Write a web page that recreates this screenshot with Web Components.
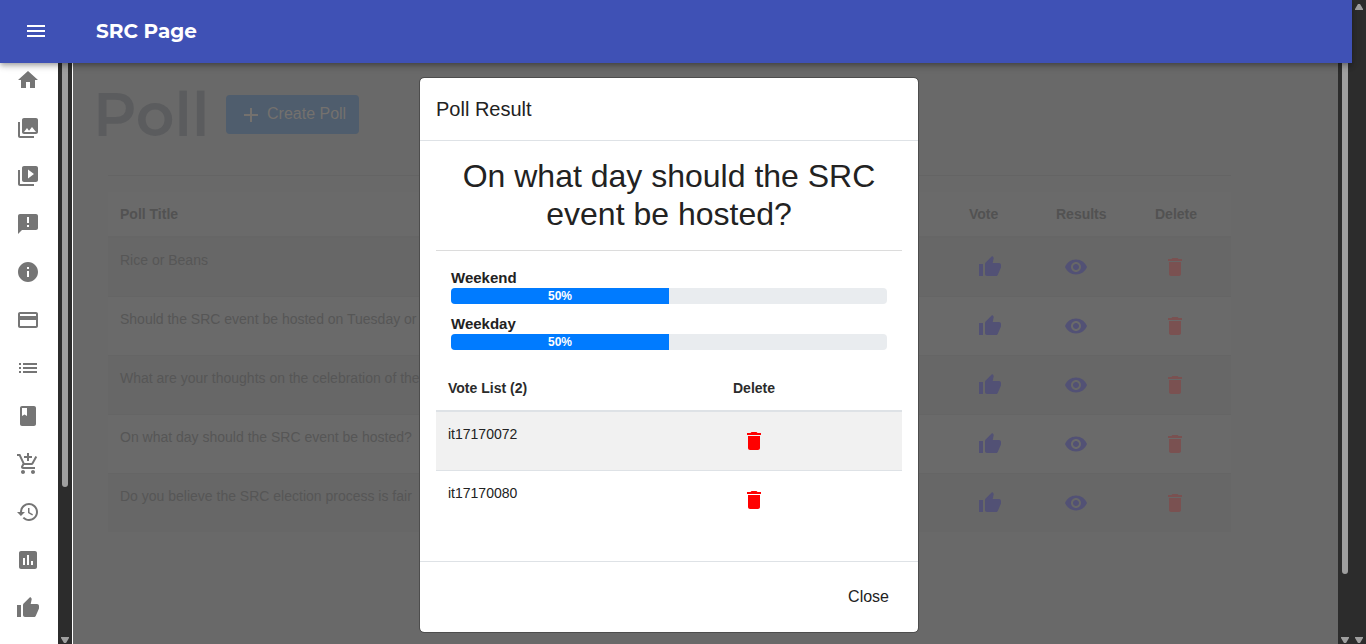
<!DOCTYPE html>
<html lang="en">
<head>
<meta charset="utf-8">
<title>SRC Page</title>
<style>
html, body { margin: 0; height: 100%; }
body { font-family: "Liberation Sans", Arial, sans-serif; font-size: 14px; color: #212529; overflow: hidden; }
</style>
</head>
<body>
<src-app></src-app>
<script>
const PATHS = {
  menu: 'M3 18h18v-2H3v2zm0-5h18v-2H3v2zm0-7v2h18V6H3z',
  home: 'M10 20v-6h4v6h5v-8h3L12 3 2 12h3v8z',
  photos: 'M22 16V4c0-1.100-.9-2-2-2H8c-1.100 0-2 .9-2 2v12c0 1.100.9 2 2 2h12c1.100 0 2-.9 2-2zm-11-4l2.030 2.710L16 11l4 5H8l3-4zM2 6v14c0 1.100.9 2 2 2h14v-2H4V6H2z',
  videos: 'M4 6H2v14c0 1.100.9 2 2 2h14v-2H4V6zm16-4H8c-1.100 0-2 .9-2 2v12c0 1.100.9 2 2 2h12c1.100 0 2-.9 2-2V4c0-1.100-.9-2-2-2zm-8 12.500v-9l6 4.500-6 4.500z',
  feedback: 'M20 2H4c-1.100 0-1.990.9-1.990 2L2 22l4-4h14c1.100 0 2-.9 2-2V4c0-1.100-.9-2-2-2zm-7 9h-2V5h2v6zm0 4h-2v-2h2v2z',
  info: 'M12 2C6.480 2 2 6.480 2 12s4.480 10 10 10 10-4.480 10-10S17.520 2 12 2zm1 15h-2v-6h2v6zm0-8h-2V7h2v2z',
  card: 'M20 4H4c-1.110 0-1.990.890-1.990 2L2 18c0 1.110.890 2 2 2h16c1.110 0 2-.890 2-2V6c0-1.110-.890-2-2-2zm0 14H4v-6h16v6zm0-10H4V6h16v2z',
  list: 'M3 13h2v-2H3v2zm0 4h2v-2H3v2zm0-8h2V7H3v2zm4 4h14v-2H7v2zm0 4h14v-2H7v2zM7 7v2h14V7H7z',
  book: 'M18 2H6c-1.100 0-2 .9-2 2v16c0 1.100.9 2 2 2h12c1.100 0 2-.9 2-2V4c0-1.100-.9-2-2-2zM6 4h5v8l-2.500-1.500L6 12V4z',
  cart: 'M11 9h2V6h3V4h-3V1h-2v3H8v2h3v3zm-4 9c-1.100 0-1.990.9-1.990 2S5.900 22 7 22s2-.9 2-2-.9-2-2-2zm10 0c-1.100 0-1.990.9-1.990 2s.890 2 1.990 2 2-.9 2-2-.9-2-2-2zm-9.830-3.250l.030-.120.9-1.630h7.450c.750 0 1.410-.410 1.750-1.030l3.860-7.010L19.420 4h-.010l-1.100 2-2.760 5H8.530l-.130-.270L6.160 6l-.950-2-.940-2H1v2h2l3.600 7.590-1.350 2.450c-.160.280-.250.610-.250.960 0 1.100.9 2 2 2h12v-2H7.420c-.130 0-.250-.110-.250-.250z',
  history: 'M13 3c-4.970 0-9 4.030-9 9H1l3.890 3.890.070.140L9 12H6c0-3.870 3.130-7 7-7s7 3.130 7 7-3.130 7-7 7c-1.930 0-3.680-.790-4.940-2.060l-1.420 1.420C8.270 19.990 10.510 21 13 21c4.970 0 9-4.030 9-9s-4.030-9-9-9zm-1 5v5l4.280 2.540.720-1.210-3.500-2.080V8H12z',
  chart: 'M19 3H5c-1.100 0-2 .9-2 2v14c0 1.100.9 2 2 2h14c1.100 0 2-.9 2-2V5c0-1.100-.9-2-2-2zM9 17H7v-7h2v7zm4 0h-2V7h2v10zm4 0h-2v-4h2v4z',
  thumb: 'M1 21h4V9H1v12zm22-11c0-1.100-.9-2-2-2h-6.310l.950-4.570.030-.320c0-.410-.170-.790-.440-1.060L14.170 1 7.590 7.590C7.220 7.950 7 8.450 7 9v10c0 1.100.9 2 2 2h9c.830 0 1.540-.5 1.840-1.220l3.020-7.050c.090-.230.140-.470.140-.730v-2z',
  eye: 'M12 4.500C7 4.500 2.730 7.610 1 12c1.730 4.390 6 7.500 11 7.500s9.270-3.110 11-7.500c-1.730-4.390-6-7.500-11-7.500zM12 17c-2.760 0-5-2.240-5-5s2.240-5 5-5 5 2.240 5 5-2.240 5-5 5zm0-8c-1.660 0-3 1.340-3 3s1.340 3 3 3 3-1.340 3-3-1.340-3-3-3z',
  trash: 'M6 19c0 1.100.9 2 2 2h8c1.100 0 2-.9 2-2V7H6v12zM19 4h-3.500l-1-1h-5l-1 1H5v2h14V4z',
  add: 'M19 13h-6v6h-2v-6H5v-2h6V5h2v6h6v2z'
};

function define(name, render) {
  customElements.define(name, class extends HTMLElement {
    constructor() {
      super();
      this.attachShadow({ mode: 'open' });
    }
    connectedCallback() {
      const template = document.createElement('template');
      template.innerHTML = render(this);
      this.shadowRoot.replaceChildren(template.content.cloneNode(true));
    }
  });
}

define('md-icon', el => `
  <style>:host { display: block; width: 24px; height: 24px; } svg { display: block; width: 100%; height: 100%; fill: currentColor; }</style>
  <svg viewBox="0 0 24 24" aria-hidden="true"><path d="${PATHS[el.getAttribute('name')]}"/></svg>`);

define('icon-button', el => `
  <style>
    :host { display: block; }
    button { display: block; border: 0; background: none; padding: 0; color: inherit; cursor: pointer; }
  </style>
  <button type="button" aria-label="${el.getAttribute('label')}"><md-icon name="${el.getAttribute('icon')}"></md-icon></button>`);

define('scroll-track', el => `
  <style>
    :host { display: flex; flex-direction: column; align-items: center; justify-content: space-between; flex: none; width: 14px; background: #2c2c2c; }
    .thumb { width: 6px; height: ${el.getAttribute('thumb') || 0}%; background: #9f9f9f; border-radius: 0 0 3px 3px; }
    svg { display: block; width: 8px; height: 6px; margin: 1px 0; fill: #9f9f9f; }
    .up { margin-top: 4px; }
  </style>
  ${el.hasAttribute('thumb') ? '<div class="thumb"></div>' : '<svg class="up" viewBox="0 0 8 6"><path d="M0 6V5L3 0h2l3 5v1z"/></svg>'}
  <svg viewBox="0 0 8 6"><path d="M0 0h8v1L5 6H3L0 1z"/></svg>`);

define('app-header', () => `
  <style>
    :host { display: block; position: relative; z-index: 2; flex: none; }
    header { display: flex; align-items: center; gap: 48px; height: 63px; padding: 0 24px 2px; box-sizing: border-box;
      background: #3f51b5; color: #fff;
      box-shadow: 0 2px 4px -1px rgba(0,0,0,.2), 0 4px 5px rgba(0,0,0,.14), 0 1px 10px rgba(0,0,0,.12); }
    .title { font: 700 20px/32px Montserrat, Inter, sans-serif; }
  </style>
  <header><icon-button icon="menu" label="Toggle menu"></icon-button><div class="title"><slot></slot></div></header>`);

define('side-nav', () => `
  <style>
    :host { display: block; flex: none; width: 58px; overflow: hidden; background: #fff; color: #757575; }
    nav { display: flex; flex-direction: column; gap: 24px; padding: 5px 0 0 16px; }
    a { display: block; width: 24px; color: inherit; }
  </style>
  <nav>${[['home', 'Home'], ['photos', 'Gallery'], ['videos', 'Videos'], ['feedback', 'Feedback'], ['info', 'About'], ['card', 'Payments'], ['list', 'Lists'], ['book', 'Handbook'], ['cart', 'Shop'], ['history', 'History'], ['chart', 'Reports'], ['thumb', 'Poll']]
    .map(([icon, label]) => `<a href="#${icon}" aria-label="${label}"><md-icon name="${icon}"></md-icon></a>`).join('')}</nav>`);

define('poll-page', () => `
  <style>
    :host { display: block; flex: 1; min-width: 0; overflow: hidden; border-left: 1px solid #fff; background: #696969; color: #565656; }
    .top { display: flex; align-items: center; padding: 16px 20px 0; height: 71px; }
    h1 { margin: 0; flex: none; width: 133px; font: 600 60px/70px Montserrat, Inter, sans-serif; color: #5b5c5e; }
    .create { display: flex; align-items: center; gap: 4px; height: 39px; padding: 0 13px 2px; border: 0; border-radius: 4px;
      background: #4f5d6d; color: #74716e; font: 16px/24px "Liberation Sans", Arial, sans-serif; cursor: pointer; }
    .create md-icon { margin-top: 2px; }
    .body { padding: 25px 107px 0 35px; }
    hr { border: 0; border-top: 1px solid #646464; margin: 0 0 16px; }
    table { width: 100%; table-layout: fixed; border-spacing: 0; font-size: 14px; line-height: 20px; background: #6a6a6a; }
    th { padding: 12px; text-align: left; border-bottom: 2px solid #666; color: #525252; }
    td { height: 58px; box-sizing: border-box; padding: 12px; vertical-align: top; white-space: nowrap; }
    td.act { padding: 17px 0 0 20px; }
    td.vote { padding-left: 21px; }
    tr + tr td { height: 59px; border-top: 1px solid #656565; }
    tbody tr:nth-child(odd) { background: #676767; }
    .blue { color: #525175; } .red { color: #7a5151; }
    .vote { width: 87px; } .res { width: 99px; } .del { width: 88px; }
    th { box-sizing: border-box; }
  </style>
  <div class="top"><h1>Poll</h1><button class="create" type="button"><md-icon name="add"></md-icon>Create Poll</button></div>
  <div class="body">
    <hr>
    <table>
      <thead><tr><th>Poll Title</th><th class="vote">Vote</th><th class="res">Results</th><th class="del">Delete</th></tr></thead>
      <tbody>${['Rice or Beans', 'Should the SRC event be hosted on Tuesday or', 'What are your thoughts on the celebration of the', 'On what day should the SRC event be hosted?', 'Do you believe the SRC election process is fair']
        .map(t => `<tr><td>${t}</td>
          <td class="act vote blue"><icon-button icon="thumb" label="Vote"></icon-button></td>
          <td class="act blue"><icon-button icon="eye" label="Results"></icon-button></td>
          <td class="act red"><icon-button icon="trash" label="Delete"></icon-button></td></tr>`).join('')}</tbody>
    </table>
  </div>`);

define('result-bar', el => `
  <style>
    :host { display: block; }
    .label { font-weight: 700; font-size: 15px; line-height: 21px; }
    .track { height: 16px; border-radius: 4px; background: #e9ecef; overflow: hidden; }
    .fill { width: ${el.getAttribute('value')}%; background: #007bff; color: #fff; text-align: center; font-weight: 700; font-size: 12px; line-height: 16px; }
  </style>
  <div class="label" id="l"><slot></slot></div>
  <div class="track" role="progressbar" aria-labelledby="l" aria-valuemin="0" aria-valuemax="100" aria-valuenow="${el.getAttribute('value')}"><div class="fill">${el.getAttribute('value')}%</div></div>`);

define('vote-list', () => `
  <style>
    :host { display: block; }
    table { width: 100%; table-layout: fixed; border-spacing: 0; font-size: 14px; line-height: 20px; }
    th { padding: 12px; text-align: left; border-bottom: 2px solid #dee2e6; color: #2b2b2b; }
    th:last-child { width: 181px; box-sizing: border-box; }
    td { height: 58px; box-sizing: border-box; padding: 12px; vertical-align: top; }
    td.act { padding: 17px 0 0 21px; color: red; }
    tr + tr td { height: 59px; border-top: 1px solid #dee2e6; }
    tbody tr:nth-child(odd) { background: #f1f1f1; }
  </style>
  <table>
    <thead><tr><th>Vote List (2)</th><th>Delete</th></tr></thead>
    <tbody>${['it17170072', 'it17170080'].map(id => `<tr><td>${id}</td><td class="act"><icon-button icon="trash" label="Delete ${id}"></icon-button></td></tr>`).join('')}</tbody>
  </table>`);

define('result-dialog', () => `
  <style>
    :host { display: flex; justify-content: center; align-items: flex-start; }
    dialog { position: static; display: block; width: 100%; max-width: 500px; box-sizing: border-box; margin: 0; padding: 0;
      border: 1px solid #4d4d4d; border-radius: 5px; background: #fff; background-clip: padding-box; color: #222; }
    .head { padding: 16px; border-bottom: 1px solid #dee2e6; font-size: 20px; line-height: 30px; }
    .body { padding: 16px; }
    h2 { margin: 0; padding-bottom: 17px; border-bottom: 1px solid #dcdcdc; font-weight: 400; font-size: 32px; line-height: 38px; text-align: center; }
    .bars { display: grid; gap: 9px; padding: 16px 15px; }
    vote-list { margin-bottom: 16px; }
    .foot { display: flex; justify-content: flex-end; padding: 16px; border-top: 1px solid #dee2e6; }
    .foot button { height: 38px; padding: 0 13px; border: 0; background: none; color: inherit; font: 16px/24px "Liberation Sans", Arial, sans-serif; cursor: pointer; }
  </style>
  <dialog open aria-labelledby="t">
    <div class="head" id="t">Poll Result</div>
    <div class="body">
      <h2><slot></slot></h2>
      <div class="bars"><result-bar value="50">Weekend</result-bar><result-bar value="50">Weekday</result-bar></div>
      <vote-list></vote-list>
    </div>
    <div class="foot"><button type="button">Close</button></div>
  </dialog>`);

define('src-app', () => `
  <style>
    :host { display: flex; height: 100vh; }
    .main { display: flex; flex-direction: column; flex: 1; min-width: 0; }
    .stage { position: relative; display: flex; flex: 1; min-height: 0; }
    result-dialog { position: absolute; inset: 14px 14px 0 0; }
  </style>
  <div class="main">
    <app-header>SRC Page</app-header>
    <div class="stage">
      <side-nav></side-nav>
      <scroll-track thumb="73"></scroll-track>
      <poll-page></poll-page>
      <scroll-track thumb="88"></scroll-track>
      <result-dialog>On what day should the SRC event be hosted?</result-dialog>
    </div>
  </div>
  <scroll-track></scroll-track>`);
</script>
</body>
</html>
